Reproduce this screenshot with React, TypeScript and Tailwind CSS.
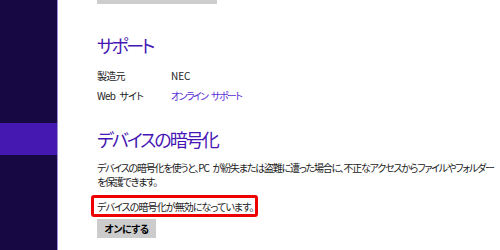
export default function App() {
  return (
    <div className="flex h-[250px] w-[500px] overflow-hidden bg-white font-['Noto_Sans_CJK_JP',sans-serif] text-[#222222] [font-feature-settings:'palt']">
      {/* left nav */}
      <div className="flex w-[58px] shrink-0 flex-col border-r border-[#9c8fd6] bg-[#170742]">
        <div className="h-[123px]" />
        <div className="h-[32px] bg-[#4618b2]" />
      </div>

      <div className="flex flex-col pl-[39px]">
        <div className="h-[4px] w-[120px] bg-[#cdcdcd]" />

        <h2 className="mt-[28px] text-[18px] leading-[26px] tracking-[-2.5px] text-[#4617b4]">サポート</h2>

        <div className="mt-[11px] flex flex-col gap-[6px] text-[10px] leading-[14px] tracking-[-0.8px] [word-spacing:3px]">
          <div className="flex">
            <span className="w-[74px]">製造元</span>
            <span className="tracking-normal">NEC</span>
          </div>
          <div className="flex">
            <span className="w-[74px]">Web サイト</span>
            <span className="tracking-[-1.6px] text-[#5a2fd4]">オンライン サポート</span>
          </div>
        </div>

        <h2 className="mt-[23px] text-[18px] leading-[26px] tracking-[-2px] text-[#4617b4]">デバイスの暗号化</h2>

        <p className="mt-[9px] w-[410px] text-[10px] leading-[14px] tracking-[-1.2px] [word-spacing:3px]">
          デバイスの暗号化を使うと、PC&nbsp;が紛失または盗難に遭った場合に、不正なアクセスからファイルやフォルダー
          <br />
          を保護できます。
        </p>

        <div className="relative mt-[11px]">
          <p className="text-[10px] leading-[14px] tracking-[-0.9px]">デバイスの暗号化が無効になっています。</p>
          <div className="absolute -top-[5px] -left-[6px] h-[22px] w-[167px] rounded-[3px] border-[3px] border-[#ee0000]" />
        </div>

        <button className="mt-[5px] h-[19px] w-[59px] bg-[#cccccc] text-[10px] font-bold leading-[19px] tracking-[-0.5px] text-black">
          オンにする
        </button>
      </div>
    </div>
  );
}
